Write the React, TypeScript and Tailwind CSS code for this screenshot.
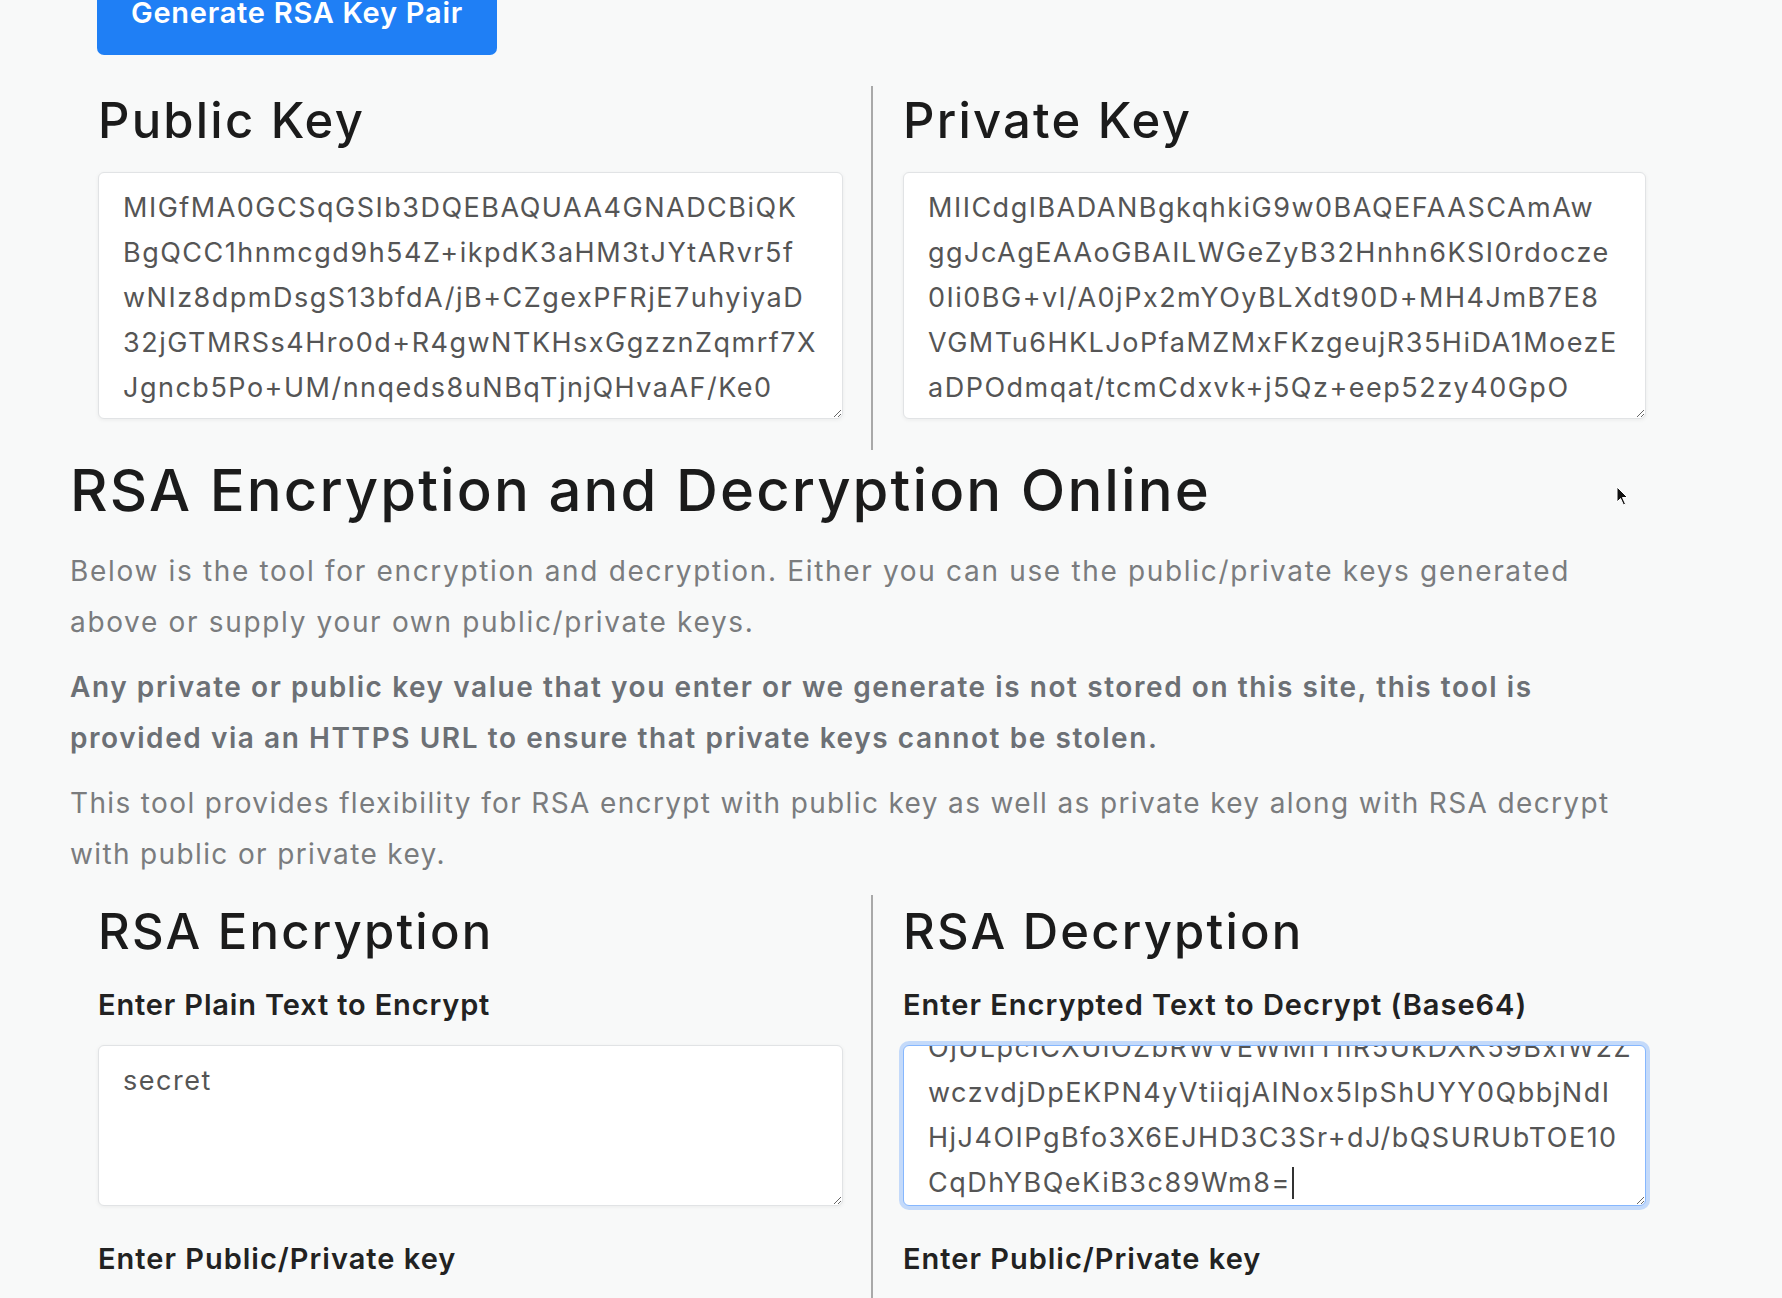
const publicKey = [
  'MIGfMA0GCSqGSIb3DQEBAQUAA4GNADCBiQK',
  'BgQCC1hnmcgd9h54Z+ikpdK3aHM3tJYtARvr5f',
  'wNIz8dpmDsgS13bfdA/jB+CZgexPFRjE7uhyiyaD',
  '32jGTMRSs4Hro0d+R4gwNTKHsxGgzznZqmrf7X',
  'Jgncb5Po+UM/nnqeds8uNBqTjnjQHvaAF/Ke0',
  'a1Lk9mQ2xWz7rT0pNs4vYc8uEhJd3fGb6IoAAB',
].join('\n')

const privateKey = [
  'MIICdgIBADANBgkqhkiG9w0BAQEFAASCAmAw',
  'ggJcAgEAAoGBAILWGeZyB32Hnhn6KSI0rdocze',
  '0Ii0BG+vl/A0jPx2mYOyBLXdt90D+MH4JmB7E8',
  'VGMTu6HKLJoPfaMZMxFKzgeujR35HiDA1MoezE',
  'aDPOdmqat/tcmCdxvk+j5Qz+eep52zy40GpO',
  'Tq7hL0cZx4NvRb2WmK9sYdPfE1uJgA3oHiXw',
].join('\n')

// scrolled to the end, so the first line is only half visible
const cipher = [
  'OjULpcICXUlOZbRWVEWMITIlR5UkDXK59BxIW2Z',
  'wczvdjDpEKPN4yVtiiqjAINox5lpShUYY0QbbjNdI',
  'HjJ4OIPgBfo3X6EJHD3C3Sr+dJ/bQSURUbTOE10',
  'CqDhYBQeKiB3c89Wm8=',
]

function KeyBox({ value }: { value: string }) {
  return (
    <textarea
      readOnly
      wrap="off"
      value={value}
      className="block h-[247px] w-full overflow-hidden rounded-[6px] border border-[#e1e3e5] bg-white px-[24px] pt-[12px] text-[27px] leading-[45px] tracking-[1.5px] text-[#555] shadow-[0_1px_4px_rgba(0,0,0,0.06)] outline-none"
    />
  )
}

export default function App() {
  return (
    <div className="relative min-h-screen overflow-hidden bg-[#f8f9f9] font-[Inter,sans-serif]">
      <div className="ml-[70px] w-[1606px]">
        <div className="pl-[27px]">
          <button className="-mt-[29px] block h-[84px] w-[400px] rounded-[7px] bg-[#1f7ff5] text-[29px] font-semibold tracking-[0.75px] text-white">
            Generate RSA Key Pair
          </button>
        </div>

        <div className="mt-[31px] grid grid-cols-2">
          <div className="border-r-2 border-[#a9a9a9] pb-[31px] pl-[28px] pr-[28px] pt-[10px]">
            <h2 className="text-[49px] font-medium leading-none tracking-[2.2px] text-[#1b1b1b]">Public Key</h2>
            <div className="mt-[27px]">
              <KeyBox value={publicKey} />
            </div>
          </div>
          <div className="pb-[31px] pl-[30px] pr-[30px] pt-[10px]">
            <h2 className="text-[49px] font-medium leading-none tracking-[2.2px] text-[#1b1b1b]">Private Key</h2>
            <div className="mt-[27px]">
              <KeyBox value={privateKey} />
            </div>
          </div>
        </div>

        <h1 className="mt-[11px] whitespace-nowrap text-[58px] font-medium leading-none tracking-[2.1px] text-[#1b1b1b]">
          RSA Encryption and Decryption Online
        </h1>
        <p className="mt-[27px] whitespace-nowrap text-[28px] leading-[51px] tracking-[1.67px] text-[#7a7c7e]">
          Below is the tool for encryption and decryption. Either you can use the public/private keys generated
          <br />
          above or supply your own public/private keys.
        </p>
        <p className="mt-[14px] whitespace-nowrap text-[28px] font-semibold leading-[51px] tracking-[1.57px] text-[#6c7075]">
          Any private or public key value that you enter or we generate is not stored on this site, this tool is
          <br />
          provided via an HTTPS URL to ensure that private keys cannot be stolen.
        </p>
        <p className="mt-[14px] whitespace-nowrap text-[28px] leading-[51px] tracking-[1.36px] text-[#7a7c7e]">
          This tool provides flexibility for RSA encrypt with public key as well as private key along with RSA decrypt
          <br />
          with public or private key.
        </p>

        <div className="mt-[15px] grid grid-cols-2">
          <div className="border-r-2 border-[#a9a9a9] pb-[40px] pl-[28px] pr-[28px] pt-[12px]">
            <h2 className="text-[49px] font-medium leading-none tracking-[2.2px] text-[#1b1b1b]">RSA Encryption</h2>
            <label className="mt-[34px] block text-[29px] font-semibold leading-none tracking-[0.85px] text-[#222]">
              Enter Plain Text to Encrypt
            </label>
            <textarea
              readOnly
              value="secret"
              className="mt-[26px] block h-[161px] w-full overflow-hidden rounded-[6px] border border-[#e1e3e5] bg-white px-[24px] pt-[12px] text-[27px] leading-[45px] tracking-[1.5px] text-[#555] shadow-[0_1px_4px_rgba(0,0,0,0.06)] outline-none"
            />
            <label className="mt-[38px] block text-[29px] font-semibold leading-none tracking-[1px] text-[#222]">
              Enter Public/Private key
            </label>
          </div>
          <div className="pb-[40px] pl-[30px] pr-[30px] pt-[12px]">
            <h2 className="text-[49px] font-medium leading-none tracking-[2.2px] text-[#1b1b1b]">RSA Decryption</h2>
            <label className="mt-[34px] block text-[29px] font-semibold leading-none tracking-[1px] text-[#222]">
              Enter Encrypted Text to Decrypt (Base64)
            </label>
            <div className="mt-[26px] flex h-[161px] resize-y flex-col justify-end overflow-hidden rounded-[6px] border border-[#86b7fe] bg-white px-[24px] text-[27px] leading-[45px] tracking-[1.5px] text-[#555] shadow-[0_0_0_4px_rgba(13,110,253,0.22)]">
              {cipher.map((line, i) => (
                <div key={i} className="whitespace-nowrap">
                  {line}
                  {i === cipher.length - 1 && <span className="ml-[1px] inline-block h-[32px] w-[2px] bg-[#333] align-[-7px]" />}
                </div>
              ))}
            </div>
            <label className="mt-[38px] block text-[29px] font-semibold leading-none tracking-[1px] text-[#222]">
              Enter Public/Private key
            </label>
          </div>
        </div>
      </div>

      {/* mouse pointer captured in the screenshot */}
      <svg className="absolute left-[1616px] top-[486px]" width="14" height="20" viewBox="0 0 14 20">
        <path d="M1 1 L1 16 L4.5 12.5 L7.5 19 L9.5 18 L6.5 11.5 L11.5 11.5 Z" fill="#111" stroke="#fff" strokeWidth="1" />
      </svg>
    </div>
  )
}
